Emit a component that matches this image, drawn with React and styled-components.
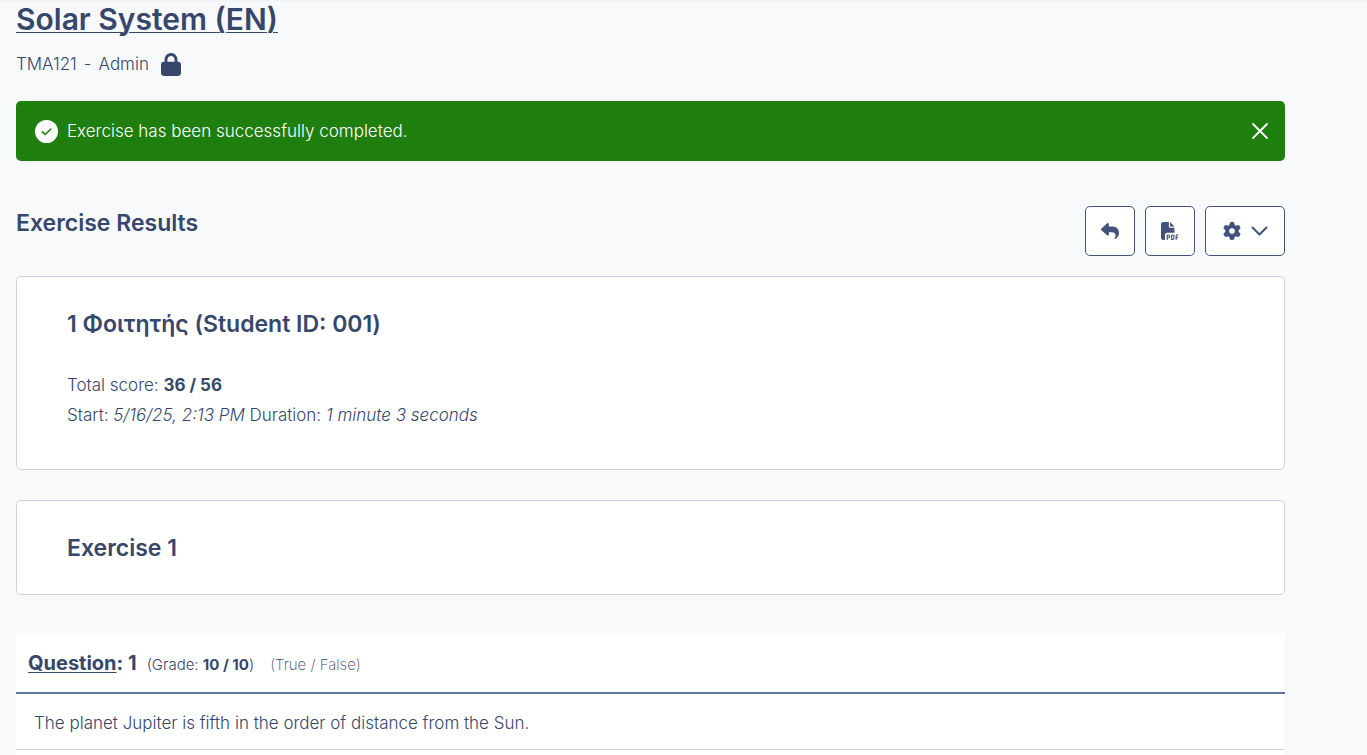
import React, { useState } from "react";
import styled, { createGlobalStyle } from "styled-components";
import { FaLock, FaReply, FaFilePdf, FaGear } from "react-icons/fa6";

const GlobalStyle = createGlobalStyle`
  *, *::before, *::after {
    box-sizing: border-box;
  }
  body {
    margin: 0;
    background: #f8f9fb;
    color: #36476b;
    font-family: Inter, "Open Sans", sans-serif;
    font-size: 17px;
    font-weight: 300;
    line-height: 30px;
  }
  h1, h2, h3, p {
    margin: 0;
  }
`;

const Page = styled.div`
  display: flex;
  flex-direction: column;
  min-height: 100vh;
  border-top: 2px solid #f3f4f6;
  padding: 0 82px 0 16px;
`;

const CourseHeader = styled.header`
  margin-bottom: 22px;
`;

const CourseTitle = styled.h1`
  font-size: 30px;
  line-height: 34px;
  font-weight: 600;
`;

const CourseLink = styled.a`
  color: inherit;
  text-decoration: underline;
  text-decoration-thickness: 1px;
  text-underline-offset: 2px;
`;

const CourseInfo = styled.div`
  display: flex;
  align-items: center;
  gap: 7px;
  margin-top: 13px;

  svg {
    width: 20px;
    height: 23px;
    margin-left: 5px;
  }
`;

const Alert = styled.div`
  display: flex;
  align-items: center;
  gap: 9px;
  height: 60px;
  padding: 0 16px 0 19px;
  border-radius: 5px;
  background: #1e7e0e;
  color: #fff;
`;

const AlertText = styled.span`
  flex: 1;
`;

const CloseButton = styled.button`
  display: flex;
  padding: 0;
  border: none;
  background: none;
  color: inherit;
  cursor: pointer;
`;

const Toolbar = styled.div`
  display: flex;
  justify-content: space-between;
  margin-top: 45px;
`;

const SectionTitle = styled.h2`
  font-size: 23px;
  line-height: 35px;
  font-weight: 600;
`;

const ButtonGroup = styled.div`
  display: flex;
  gap: 10px;
`;

const ToolButton = styled.button`
  display: flex;
  align-items: center;
  justify-content: center;
  gap: 10px;
  width: ${(props) => (props.$wide ? "80px" : "50px")};
  height: 50px;
  padding: 0;
  border: 1px solid #43527a;
  border-radius: 5px;
  background: #fff;
  color: #43527a;
  cursor: pointer;
`;

const Card = styled.section`
  margin-top: ${(props) => props.$gap};
  padding: 30px 50px 28px;
  border: 1px solid #ced2d8;
  border-radius: 5px;
  background: #fff;
`;

const Summary = styled.div`
  padding: 28px 0 11px;

  em {
    font-weight: 300;
  }
  strong {
    font-weight: 700;
  }
`;

const QuestionTable = styled.table`
  width: 100%;
  margin-top: 38px;
  border-collapse: collapse;
  background: #fff;

  th {
    height: 60px;
    padding: 2px 12px 0;
    border-bottom: 2px solid #5f74a0;
    text-align: left;
    font-weight: 300;
  }
  td {
    height: 56px;
    padding: 3px 18px 0;
    border-bottom: 1px solid #ced2d8;
  }
`;

const QuestionHead = styled.div`
  display: flex;
  align-items: baseline;
`;

const QuestionNumber = styled.span`
  font-size: 20px;
  font-weight: 700;

  u {
    text-decoration-thickness: 1px;
    text-underline-offset: 2px;
  }
`;

const QuestionNote = styled.span`
  margin-left: ${(props) => (props.$type ? "16px" : "10px")};
  font-size: 15px;
  font-weight: ${(props) => (props.$type ? 200 : 300)};

  strong {
    font-weight: 700;
  }
`;

const Answers = styled.div`
  flex: 1;
  background: #fff;
`;

const CheckIcon = () => (
  <svg width="23" height="23" viewBox="0 0 23 23" aria-hidden="true">
    <circle cx="11.5" cy="11.5" r="11.5" fill="currentColor" />
    <path d="M7.4 11.8 10.3 14.5 15.8 9" fill="none" stroke="#1e7e0e" strokeWidth="1.6" strokeLinecap="round" strokeLinejoin="round" />
  </svg>
);

const CloseIcon = () => (
  <svg width="18" height="18" viewBox="0 0 18 18" fill="none" stroke="currentColor" strokeWidth="1.8" strokeLinecap="round" aria-hidden="true">
    <path d="M2 2 16 16M16 2 2 16" />
  </svg>
);

const ChevronIcon = () => (
  <svg width="17" height="10" viewBox="0 0 17 10" fill="none" stroke="currentColor" strokeWidth="2" strokeLinecap="round" strokeLinejoin="round" aria-hidden="true">
    <path d="M1.5 1.5 8.5 8.5 15.5 1.5" />
  </svg>
);

const App = () => {
  const [showAlert, setShowAlert] = useState(true);

  return (
    <>
      <GlobalStyle />
      <Page>
        <CourseHeader>
          <CourseTitle>
            <CourseLink href="#course">Solar System (EN)</CourseLink>
          </CourseTitle>
          <CourseInfo>
            <span>TMA121</span>
            <span>-</span>
            <span>Admin</span>
            <FaLock />
          </CourseInfo>
        </CourseHeader>

        {showAlert && (
          <Alert role="alert">
            <CheckIcon />
            <AlertText>Exercise has been successfully completed.</AlertText>
            <CloseButton aria-label="Close" onClick={() => setShowAlert(false)}>
              <CloseIcon />
            </CloseButton>
          </Alert>
        )}

        <Toolbar>
          <SectionTitle>Exercise Results</SectionTitle>
          <ButtonGroup>
            <ToolButton aria-label="Back">
              <FaReply size={18} />
            </ToolButton>
            <ToolButton aria-label="Export">
              <FaFilePdf size={18} />
            </ToolButton>
            <ToolButton $wide aria-label="Settings">
              <FaGear size={18} />
              <ChevronIcon />
            </ToolButton>
          </ButtonGroup>
        </Toolbar>

        <Card $gap="20px">
          <SectionTitle>1 Φοιτητής (Student ID: 001)</SectionTitle>
          <Summary>
            <p>
              Total score: <strong>36 / 56</strong>
            </p>
            <p>
              Start: <em>5/16/25, 2:13 PM</em> Duration: <em>1 minute 3 seconds</em>
            </p>
          </Summary>
        </Card>

        <Card $gap="30px">
          <SectionTitle>Exercise 1</SectionTitle>
        </Card>

        <QuestionTable>
          <thead>
            <tr>
              <th scope="col">
                <QuestionHead>
                  <QuestionNumber>
                    <u>Question</u>: 1
                  </QuestionNumber>
                  <QuestionNote>
                    (Grade: <strong>10 / 10</strong>)
                  </QuestionNote>
                  <QuestionNote $type>(True / False)</QuestionNote>
                </QuestionHead>
              </th>
            </tr>
          </thead>
          <tbody>
            <tr>
              <td>The planet Jupiter is fifth in the order of distance from the Sun.</td>
            </tr>
          </tbody>
        </QuestionTable>
        <Answers />
      </Page>
    </>
  );
};

export default App;
